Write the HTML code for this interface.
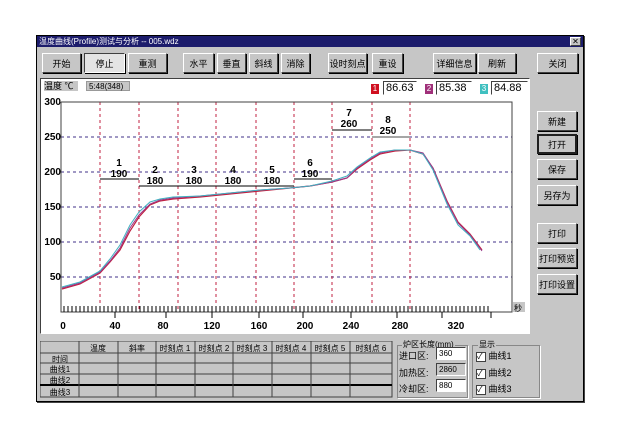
<!DOCTYPE html>
<html><head><meta charset="utf-8"><style>
body{margin:0;width:621px;height:438px;background:#fff;position:relative;overflow:hidden;font-family:"Liberation Sans","Noto Sans CJK SC",sans-serif;font-size:9px;color:#000}
.a{position:absolute;box-sizing:border-box}
.btn{position:absolute;box-sizing:border-box;background:#c6c6c6;border:1px solid;border-color:#fff #404040 #404040 #fff;box-shadow:1px 1px 0 #000;text-align:center;font-size:9px;display:flex;align-items:center;justify-content:center}
.in{position:absolute;box-sizing:border-box;background:#fff;border:1px solid;border-color:#404040 #fff #fff #404040;font-size:9px;padding-left:2px;line-height:11px}
svg text{font-family:"Liberation Sans",sans-serif}
</style></head><body>
<div class="a" style="left:36px;top:35px;width:548px;height:367px;background:#c6c6c6;border:1px solid #000;box-shadow:1px 1px 0 #444"></div>
<div class="a" style="left:37px;top:36px;width:546px;height:11px;background:#1c1c6c;color:#fff;font-size:8px;line-height:11px;padding-left:2px">温度曲线(Profile)测试与分析 -- 005.wdz</div>
<div class="a" style="left:570px;top:37px;width:11px;height:9px;background:#c6c6c6;border:1px solid #fff;border-right-color:#404040;border-bottom-color:#404040;font-size:8px;line-height:7px;text-align:center">✕</div>

<div class="btn" style="left:42px;top:53px;width:39px;height:20px">开始</div>
<div class="btn" style="left:84px;top:53px;width:41px;height:20px;background:#e4e4e4;border-color:#404040 #fff #fff #404040">停止</div>
<div class="btn" style="left:128px;top:53px;width:39px;height:20px">重测</div>
<div class="btn" style="left:183px;top:53px;width:31px;height:20px">水平</div>
<div class="btn" style="left:217px;top:53px;width:29px;height:20px">垂直</div>
<div class="btn" style="left:249px;top:53px;width:29px;height:20px">斜线</div>
<div class="btn" style="left:281px;top:53px;width:29px;height:20px">消除</div>
<div class="btn" style="left:328px;top:53px;width:39px;height:20px">设时刻点</div>
<div class="btn" style="left:372px;top:53px;width:31px;height:20px">重设</div>
<div class="btn" style="left:433px;top:53px;width:43px;height:20px">详细信息</div>
<div class="btn" style="left:478px;top:53px;width:38px;height:20px">刷新</div>
<div class="btn" style="left:537px;top:53px;width:41px;height:20px">关闭</div>

<div class="a" style="left:40px;top:78px;width:490px;height:256px;background:#fff;border:1px solid;border-color:#404040 #fff #fff #404040"></div>
<div class="a" style="left:44px;top:81px;width:34px;height:10px;background:#c6c6c6;font-size:9px;line-height:10px">温度 ℃</div>
<div class="a" style="left:86px;top:81px;width:44px;height:10px;background:#c6c6c6;font-size:8px;line-height:10px;padding-left:2px;border:1px solid #999">5:48(348)</div>
<div class="a" style="left:371px;top:84px;width:8px;height:10px;background:#d01020;color:#fff;font-size:8px;line-height:10px;text-align:center">1</div>
<div class="in" style="left:383px;top:81px;width:34px;height:14px;font-size:11px;line-height:12px">86.63</div>
<div class="a" style="left:425px;top:84px;width:8px;height:10px;background:#a0307a;color:#fff;font-size:8px;line-height:10px;text-align:center">2</div>
<div class="in" style="left:436px;top:81px;width:36px;height:14px;font-size:11px;line-height:12px">85.38</div>
<div class="a" style="left:480px;top:84px;width:8px;height:10px;background:#40c0c0;color:#fff;font-size:8px;line-height:10px;text-align:center">3</div>
<div class="in" style="left:491px;top:81px;width:37px;height:14px;font-size:11px;line-height:12px">84.88</div>

<svg class="a" style="left:0;top:0" width="621" height="438">
<g stroke="#40308a" stroke-width="1" stroke-dasharray="3,3" fill="none">
<line x1="61" y1="137" x2="512" y2="137"/><line x1="61" y1="172" x2="512" y2="172"/>
<line x1="61" y1="207" x2="512" y2="207"/><line x1="61" y1="242" x2="512" y2="242"/><line x1="61" y1="277" x2="512" y2="277"/>
</g>
<g stroke="#c02040" stroke-width="1" stroke-dasharray="3,3">
<line x1="100" y1="102" x2="100" y2="312"/><line x1="139" y1="102" x2="139" y2="312"/><line x1="178" y1="102" x2="178" y2="312"/>
<line x1="216" y1="102" x2="216" y2="312"/><line x1="256" y1="102" x2="256" y2="312"/><line x1="294" y1="102" x2="294" y2="312"/>
<line x1="332" y1="102" x2="332" y2="312"/><line x1="372" y1="102" x2="372" y2="312"/><line x1="410" y1="102" x2="410" y2="312"/>
</g>
<polyline fill="none" stroke="#404040" points="61,102 512,102 512,312 61,312 61,102"/>
<g stroke="#000">
<line x1="100" y1="179" x2="139" y2="179"/><line x1="139" y1="186" x2="294" y2="186"/>
<line x1="294" y1="179" x2="332" y2="179"/><line x1="332" y1="130" x2="372" y2="130"/>
</g>
<line x1="372" y1="137" x2="410" y2="137" stroke="#888" stroke-width="1.5"/>
<g font-size="10" font-weight="bold" text-anchor="middle">
<text x="119" y="166">1</text><text x="119" y="177">190</text>
<text x="155" y="173">2</text><text x="155" y="184">180</text>
<text x="194" y="173">3</text><text x="194" y="184">180</text>
<text x="233" y="173">4</text><text x="233" y="184">180</text>
<text x="272" y="173">5</text><text x="272" y="184">180</text>
<text x="310" y="166">6</text><text x="310" y="177">190</text>
<text x="349" y="116">7</text><text x="349" y="127">260</text>
<text x="388" y="123">8</text><text x="388" y="134">250</text>
</g>
<g font-size="10" font-weight="bold" text-anchor="end">
<text x="61" y="105">300</text><text x="61" y="140">250</text><text x="61" y="175">200</text>
<text x="61" y="210">150</text><text x="61" y="245">100</text><text x="61" y="280">50</text>
</g>
<g stroke="#c02040" fill="none" stroke-width="1.2">
<polyline points="62,289 80,284 100,273 110,262 120,250 130,231 139,217 150,205 160,201 173,199 200,197 230,194 260,191 290,188 310,186 332,182 347,178 357,169 370,160 380,154 395,151 410,150 423,154 433,168 447,201 458,222 470,234 482,250"/>
</g>
<g stroke="#9a3a8a" fill="none" stroke-width="1">
<polyline points="62,288 80,283 100,272 110,261 120,248 130,228 139,215 150,204 160,200 173,198 200,196 230,193 260,190 290,188 310,186 332,182 347,178 357,168 370,159 380,153 395,150 410,150 423,153 433,168 447,202 458,223 470,235 482,251"/>
</g>
<g stroke="#40b0c0" fill="none" stroke-width="1">
<polyline points="62,287 80,282 100,271 110,259 120,245 130,225 139,212 150,202 160,199 173,197 200,196 230,193 260,190 290,188 310,186 332,181 347,176 357,167 370,158 380,152 395,150 410,150 423,154 433,170 447,204 458,225 470,236 480,250"/>
</g>
<path stroke="#000" fill="none" d="M64 306v6M68 306v6M72 306v6M76 306v6M80 306v6M84 306v6M88 306v6M92 306v6M96 306v6M100 306v6M104 306v6M108 306v6M112 306v6M116 306v6M120 306v6M124 306v6M128 306v6M132 306v6M136 306v6M140 306v6M144 306v6M148 306v6M152 306v6M156 306v6M160 306v6M164 306v6M168 306v6M172 306v6M176 306v6M180 306v6M184 306v6M188 306v6M192 306v6M196 306v6M200 306v6M204 306v6M208 306v6M212 306v6M216 306v6M220 306v6M224 306v6M228 306v6M232 306v6M236 306v6M240 306v6M244 306v6M248 306v6M252 306v6M256 306v6M260 306v6M264 306v6M268 306v6M272 306v6M276 306v6M280 306v6M284 306v6M288 306v6M292 306v6M296 306v6M300 306v6M304 306v6M308 306v6M312 306v6M316 306v6M320 306v6M324 306v6M328 306v6M332 306v6M336 306v6M340 306v6M344 306v6M348 306v6M352 306v6M356 306v6M360 306v6M364 306v6M368 306v6M372 306v6M376 306v6M380 306v6M384 306v6M388 306v6M392 306v6M396 306v6M400 306v6M404 306v6M408 306v6M412 306v6M416 306v6M420 306v6M424 306v6M428 306v6M432 306v6M436 306v6M440 306v6M444 306v6M448 306v6M452 306v6M456 306v6M460 306v6M464 306v6M468 306v6M472 306v6M476 306v6M480 306v6M484 306v6M488 306v6M115 312v6M166 312v6M212 312v6M259 312v6M303 312v6M351 312v6M397 312v6M442 312v6M491 312v6"/>
<g font-size="10" font-weight="bold" text-anchor="middle">
<text x="63" y="329">0</text><text x="115" y="329">40</text><text x="163" y="329">80</text><text x="212" y="329">120</text>
<text x="259" y="329">160</text><text x="305" y="329">200</text><text x="351" y="329">240</text><text x="400" y="329">280</text><text x="456" y="329">320</text>
</g>
<rect x="513" y="302" width="12" height="10" fill="#c6c6c6"/><text x="514" y="311" font-size="8" style="font-family:'Noto Sans CJK SC'">秒</text>
</svg>

<div class="btn" style="left:537px;top:111px;width:40px;height:20px">新建</div>
<div class="btn" style="left:537px;top:134px;width:40px;height:20px;border:2px solid #202020">打开</div>
<div class="btn" style="left:537px;top:159px;width:40px;height:20px">保存</div>
<div class="btn" style="left:537px;top:185px;width:40px;height:20px">另存为</div>
<div class="btn" style="left:537px;top:223px;width:40px;height:20px">打印</div>
<div class="btn" style="left:537px;top:248px;width:40px;height:20px">打印预览</div>
<div class="btn" style="left:537px;top:274px;width:40px;height:20px">打印设置</div>

<svg class="a" style="left:40px;top:341px" width="353" height="57">
<rect x="0" y="0" width="352" height="56" fill="#c6c6c6" stroke="#404040"/>
<g stroke="#404040"><line x1="0" y1="12" x2="352" y2="12"/><line x1="0" y1="22" x2="352" y2="22"/><line x1="0" y1="33" x2="352" y2="33"/><line x1="0" y1="44" x2="352" y2="44" stroke-width="2" stroke="#000"/>
<line x1="39" y1="0" x2="39" y2="56"/><line x1="78" y1="0" x2="78" y2="56"/><line x1="116" y1="0" x2="116" y2="56"/><line x1="155" y1="0" x2="155" y2="56"/><line x1="193" y1="0" x2="193" y2="56"/><line x1="232" y1="0" x2="232" y2="56"/><line x1="271" y1="0" x2="271" y2="56"/><line x1="310" y1="0" x2="310" y2="56"/></g>
<g font-size="8" text-anchor="middle" style="font-family:'Liberation Sans','Noto Sans CJK SC',sans-serif">
<text x="58" y="10">温度</text><text x="97" y="10">斜率</text><text x="135" y="10">时刻点 1</text><text x="174" y="10">时刻点 2</text><text x="212" y="10">时刻点 3</text><text x="251" y="10">时刻点 4</text><text x="290" y="10">时刻点 5</text><text x="331" y="10">时刻点 6</text>
<text x="20" y="21">时间</text><text x="20" y="31">曲线1</text><text x="20" y="42">曲线2</text><text x="20" y="54">曲线3</text></g>
</svg>

<div class="a" style="left:397px;top:345px;width:71px;height:53px;border:1px solid #888;box-shadow:1px 1px 0 #fff"></div>
<div class="a" style="left:402px;top:339px;background:#c6c6c6;font-size:8px;padding:0 1px">炉区长度(mm)</div>
<div class="a" style="left:399px;top:349px;font-size:9px">进口区:</div>
<div class="a" style="left:399px;top:366px;font-size:9px">加热区:</div>
<div class="a" style="left:399px;top:382px;font-size:9px">冷却区:</div>
<div class="in" style="left:436px;top:347px;width:30px;height:13px;font-size:8px">360</div>
<div class="in" style="left:436px;top:363px;width:30px;height:13px;font-size:8px;background:#c6c6c6">2860</div>
<div class="in" style="left:436px;top:379px;width:30px;height:13px;font-size:8px">880</div>

<div class="a" style="left:472px;top:345px;width:68px;height:53px;border:1px solid #888;box-shadow:1px 1px 0 #fff"></div>
<div class="a" style="left:478px;top:339px;background:#c6c6c6;font-size:8px;padding:0 1px">显示</div>
<div class="a" style="left:476px;top:349px;font-size:9px"><span style="display:inline-block;width:8px;height:8px;background:#fff;border:1px solid #404040;font-size:8px;line-height:8px;vertical-align:middle">✓</span> 曲线1</div>
<div class="a" style="left:476px;top:366px;font-size:9px"><span style="display:inline-block;width:8px;height:8px;background:#fff;border:1px solid #404040;font-size:8px;line-height:8px;vertical-align:middle">✓</span> 曲线2</div>
<div class="a" style="left:476px;top:382px;font-size:9px"><span style="display:inline-block;width:8px;height:8px;background:#fff;border:1px solid #404040;font-size:8px;line-height:8px;vertical-align:middle">✓</span> 曲线3</div>
</body></html>
